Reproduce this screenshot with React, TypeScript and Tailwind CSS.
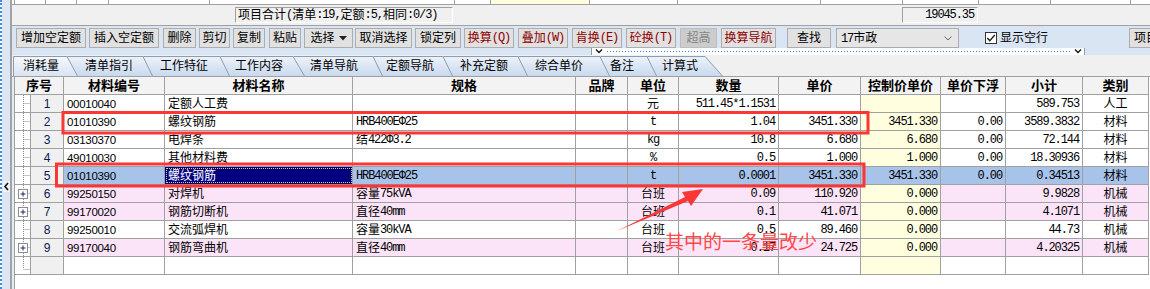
import React from 'react';

const SANS = "font-['Liberation_Sans','Noto_Sans_CJK_SC',sans-serif]";
const MONO = "font-['Liberation_Mono','Noto_Sans_CJK_SC',monospace] text-[12px] tracking-[-1.1px]";
const CJK_RE = /([\u3000-\u9fff\uff00-\uffef]+)/;

// CJK runs keep the page font, ASCII runs get the narrow mono face (SimSun-like widths)
function Mixed({ text }: { text: string }) {
  const parts = text.split(CJK_RE).filter(Boolean);
  return (
    <>
      {parts.map((p, i) =>
        CJK_RE.test(p) ? <span key={i}>{p}</span> : <span key={i} className={MONO}>{p}</span>
      )}
    </>
  );
}

const topCols = [
  { w: 'w-[31px]' }, { w: 'w-[31px]' }, { w: 'w-[32px]' }, { w: 'w-[101px]' }, { w: 'w-[245px]' },
  { w: 'w-[36px]' }, { w: 'w-[99px]', y: true }, { w: 'w-[88px]' }, { w: 'w-[143px]' }, { w: 'w-[82px]' },
  { w: 'w-[76px]' }, { w: 'w-[72px]' }, { w: 'w-[80px]' },
];

const buttons = [
  { label: '增加空定额', cls: 'ml-[4px] w-[70px]' },
  { label: '插入空定额', cls: 'ml-[3px] w-[70px]' },
  { label: '删除', cls: 'ml-[4px] w-[33px]' },
  { label: '剪切', cls: 'ml-[3px] w-[31px]' },
  { label: '复制', cls: 'ml-[3px] w-[32px]' },
  { label: '粘贴', cls: 'ml-[4px] w-[32px]' },
  { label: '选择', cls: 'ml-[3px] w-[49px]', caret: true },
  { label: '取消选择', cls: 'ml-[2px] w-[57px]' },
  { label: '锁定列', cls: 'ml-[3px] w-[46px]' },
  { label: '换算(Q)', cls: 'ml-[3px] w-[50px]', red: true },
  { label: '叠加(W)', cls: 'ml-[4px] w-[50px]', red: true },
  { label: '肯换(E)', cls: 'ml-[4px] w-[50px]', red: true },
  { label: '砼换(T)', cls: 'ml-[4px] w-[50px]', red: true },
  { label: '超高', cls: 'ml-[4px] w-[37px]', disabled: true },
  { label: '换算导航', cls: 'ml-[4px] w-[55px]', red: true },
  { label: '查找', cls: 'ml-[11px] w-[44px]' },
];

const tabs = [
  { label: '消耗量', w: 65, s: 11, cls: 'ml-[1px] w-[65px] pl-[10px] z-[10]' },
  { label: '清单指引', w: 86, s: 10, cls: '-ml-[11px] w-[86px] pl-[18px] z-[9]' },
  { label: '工作特征', w: 87, s: 10, cls: '-ml-[10px] w-[87px] pl-[17px] z-[8]' },
  { label: '工作内容', w: 85, s: 12, cls: '-ml-[10px] w-[85px] pl-[15px] z-[7]' },
  { label: '清单导航', w: 90, s: 10, cls: '-ml-[12px] w-[90px] pl-[17px] z-[6]' },
  { label: '定额导航', w: 80, s: 10, cls: '-ml-[10px] w-[80px] pl-[13px] z-[5]' },
  { label: '补充定额', w: 85, s: 10, cls: '-ml-[10px] w-[85px] pl-[17px] z-[4]' },
  { label: '综合单价', w: 92, s: 10, cls: '-ml-[10px] w-[92px] pl-[17px] z-[3]' },
  { label: '备注', w: 57, s: 10, cls: '-ml-[10px] w-[57px] pl-[10px] z-[2]' },
  { label: '计算式', w: 76, s: 18, cls: '-ml-[10px] w-[76px] pl-[15px] z-[1]' },
];

const headers = [
  { h: '材料编号', w: 'w-[101px]' },
  { h: '材料名称', w: 'w-[188px]' },
  { h: '规格', w: 'w-[223px]' },
  { h: '品牌', w: 'w-[52px]' },
  { h: '单位', w: 'w-[51px]' },
  { h: '数量', w: 'w-[100px]' },
  { h: '单价', w: 'w-[82px]' },
  { h: '控制价单价', w: 'w-[80px]' },
  { h: '单价下浮', w: 'w-[65px]' },
  { h: '小计', w: 'w-[77px]' },
  { h: '类别', w: 'w-[66px]' },
];

type Tone = 'white' | 'pink' | 'sel';
interface Row {
  no: string; code: string; name: string; spec: string; unit: string; qty: string;
  price: string; ctrl: string; down: string; sum: string; cat: string; tone: Tone; plus?: boolean;
}

const rows: Row[] = [
  { no: '1', code: '00010040', name: '定额人工费', spec: '', unit: '元', qty: '511.45*1.1531', price: '', ctrl: '', down: '', sum: '589.753', cat: '人工', tone: 'white' },
  { no: '2', code: '01010390', name: '螺纹钢筋', spec: 'HRB400EΦ25', unit: 't', qty: '1.04', price: '3451.330', ctrl: '3451.330', down: '0.00', sum: '3589.3832', cat: '材料', tone: 'white' },
  { no: '3', code: '03130370', name: '电焊条', spec: '结422Φ3.2', unit: 'kg', qty: '10.8', price: '6.680', ctrl: '6.680', down: '0.00', sum: '72.144', cat: '材料', tone: 'white' },
  { no: '4', code: '49010030', name: '其他材料费', spec: '', unit: '%', qty: '0.5', price: '1.000', ctrl: '1.000', down: '0.00', sum: '18.30936', cat: '材料', tone: 'white' },
  { no: '5', code: '01010390', name: '螺纹钢筋', spec: 'HRB400EΦ25', unit: 't', qty: '0.0001', price: '3451.330', ctrl: '3451.330', down: '0.00', sum: '0.34513', cat: '材料', tone: 'sel' },
  { no: '6', code: '99250150', name: '对焊机', spec: '容量75kVA', unit: '台班', qty: '0.09', price: '110.920', ctrl: '0.000', down: '', sum: '9.9828', cat: '机械', tone: 'pink', plus: true },
  { no: '7', code: '99170020', name: '钢筋切断机', spec: '直径40mm', unit: '台班', qty: '0.1', price: '41.071', ctrl: '0.000', down: '', sum: '4.1071', cat: '机械', tone: 'pink', plus: true },
  { no: '8', code: '99250010', name: '交流弧焊机', spec: '容量30kVA', unit: '台班', qty: '0.5', price: '89.460', ctrl: '0.000', down: '', sum: '44.73', cat: '机械', tone: 'white' },
  { no: '9', code: '99170040', name: '钢筋弯曲机', spec: '直径40mm', unit: '台班', qty: '0.17', price: '24.725', ctrl: '0.000', down: '', sum: '4.20325', cat: '机械', tone: 'pink', plus: true },
  { no: '', code: '', name: '', spec: '', unit: '', qty: '', price: '', ctrl: '', down: '', sum: '', cat: '', tone: 'white' },
];

const toneBg: Record<Tone, string> = {
  white: 'bg-white',
  pink: 'bg-[#fce4f8]',
  sel: 'bg-[#a8c3ea]',
};

function LeftStrip() {
  return (
    <div className="relative flex w-[12px] h-full shrink-0">
      <div className="w-[2px] h-full border-l-2 border-dotted border-[#3f8ee4]" />
      <div className="flex-1 h-full bg-[#dce7f3]" />
      <div className="w-[2px] h-full bg-[#a3a3a3]" />
      <svg className="absolute left-[3px] top-[181px]" width="7" height="11" viewBox="0 0 7 11">
        <rect x="0" y="0" width="7" height="11" fill="#eef2f7" />
        <path d="M5 2 L2 5.5 L5 9" fill="none" stroke="#111" strokeWidth="1.6" />
      </svg>
    </div>
  );
}

function TopFragment() {
  return (
    <div className="flex h-[5px] border-b border-[#a0a0a0] bg-white">
      <div className="w-[2px]" />
      {topCols.map((c, i) => (
        <div key={i} className={`${c.w} h-full border-l border-[#a0a0a0] ${c.y ? 'bg-[#ffffe0]' : ''}`} />
      ))}
      <div className="flex-1 h-full border-l border-[#a0a0a0]" />
    </div>
  );
}

function SummaryBar() {
  return (
    <div className="flex items-center h-[20px] bg-[#f0f0f0]">
      <div className="ml-[223px] w-[218px] h-[16px] flex items-center pl-[2px] border-t border-l border-[#a0a0a0] border-b border-r border-b-white border-r-white leading-[16px] whitespace-nowrap">
        <Mixed text="项目合计(清单:19,定额:5,相同:0/3)" />
      </div>
      <div className="ml-[449px] w-[76px] h-[16px] flex items-center justify-end pr-[3px] border-t border-l border-[#a0a0a0] border-b border-r border-b-white border-r-white">
        <span className={MONO}>19045.35</span>
      </div>
    </div>
  );
}

function Toolbar() {
  return (
    <div className="flex items-start h-[30px] pt-[2px] border-t border-[#a0a0a0] bg-[#d9e5f3] whitespace-nowrap">
      {buttons.map((b) => (
        <div
          key={b.label}
          className={`${b.cls} h-[20px] shrink-0 flex items-center justify-center border leading-none ${
            b.disabled
              ? 'bg-[#cccccc] border-[#bdbdbd] text-[#858585]'
              : 'bg-[#e1e1e1] border-[#adadad] ' + (b.red ? 'text-[#8e0000]' : 'text-black')
          }`}
        >
          <Mixed text={b.label} />
          {b.caret && (
            <svg className="ml-[4px]" width="8" height="5" viewBox="0 0 8 5">
              <path d="M0 0 H8 L4 4.5 Z" fill="#222" />
            </svg>
          )}
        </div>
      ))}
      <div className="ml-[5px] w-[123px] h-[20px] shrink-0 flex items-center justify-between pl-[4px] pr-[6px] bg-[#e6e6e6] border border-[#acacac]">
        <span className="leading-none"><Mixed text="17市政" /></span>
        <svg width="8" height="5" viewBox="0 0 8 5">
          <path d="M0.5 0.5 L4 4 L7.5 0.5" fill="none" stroke="#666" strokeWidth="1" />
        </svg>
      </div>
      <div className="ml-[26px] h-[20px] flex items-center shrink-0">
        <svg width="12" height="12" viewBox="0 0 12 12">
          <rect x="0.5" y="0.5" width="11" height="11" fill="#fff" stroke="#333" />
          <path d="M2.3 6 L4.8 8.6 L9.8 3" fill="none" stroke="#222" strokeWidth="1.4" />
        </svg>
        <span className="ml-[3px] leading-none">显示空行</span>
      </div>
      <div className="ml-[81px] w-[40px] h-[20px] shrink-0 flex items-center pl-[4px] bg-[#e1e1e1] border border-[#adadad] leading-none overflow-hidden">
        项目合计
      </div>
    </div>
  );
}

function TabStrip() {
  return (
    <div className="flex items-end h-[22px] bg-[#f0f0f0] border-b border-[#a0a0a0]">
      {tabs.map((t, i) => (
        <div key={t.label} className={`relative ${t.cls} h-[20px] shrink-0 flex items-center whitespace-nowrap leading-none`}>
          <svg className="absolute left-0 top-0" width={t.w} height="20" viewBox={`0 0 ${t.w} 20`}>
            <defs>
              <linearGradient id={`tabg${i}`} x1="0" y1="0" x2="0" y2="1">
                <stop offset="0" stopColor={i === 0 ? '#f7f9fc' : '#eef3fa'} />
                <stop offset="1" stopColor={i === 0 ? '#d8e4f3' : '#c9d9ee'} />
              </linearGradient>
            </defs>
            <path d={`M0 20 V0 H${t.w - t.s} L${t.w} 20 Z`} fill={`url(#tabg${i})`} />
            <path d={`M0.5 20 V0.5 H${t.w - t.s} L${t.w - 0.5} 20`} fill="none" stroke="#8d9cb2" strokeWidth="1" />
          </svg>
          <span className="relative text-[12px]">{t.label}</span>
        </div>
      ))}
    </div>
  );
}

function TreeCell({ plus, last }: { plus?: boolean; last?: boolean }) {
  return (
    <div className="w-[16px] h-full shrink-0 border-r border-[#a0a0a0] bg-white">
      <svg width="15" height="17" viewBox="0 0 15 17">
        <path d={`M8.5 0 V${last ? 12 : 17}`} stroke="#8c8c8c" strokeDasharray="1 1" />
        <path d={`M${plus ? 12.5 : 8.5} ${last ? 12.5 : 8.5} H15`} stroke="#8c8c8c" strokeDasharray="1 1" />
        {plus && (
          <>
            <rect x="3.5" y="4.5" width="9" height="9" fill="#fff" stroke="#8c8c8c" />
            <path d="M5.5 9 H10.5 M8 6.5 V11.5" stroke="#1b2a6b" strokeWidth="1" />
          </>
        )}
      </svg>
    </div>
  );
}

function Cell({ w, bg, align, children, extra = '' }: { w: string; bg: string; align: 'l' | 'r' | 'c'; children?: React.ReactNode; extra?: string }) {
  const al = align === 'l' ? 'justify-start pl-[3px]' : align === 'r' ? 'justify-end pr-[3px]' : 'justify-center';
  return (
    <div className={`${w} h-full shrink-0 flex items-center overflow-hidden whitespace-nowrap border-r border-[#a0a0a0] leading-[16px] ${al} ${bg} ${extra}`}>
      {children}
    </div>
  );
}

function Grid() {
  return (
    <div className="flex flex-1 bg-white">
      <div className="w-[2px] h-full bg-[#e3ebf5]" />
      <div className="flex flex-col w-[1135px] h-full border-l border-[#a0a0a0]">
        <div className="flex h-[18px] border-b border-[#a0a0a0] bg-[#f3f3f3] font-bold text-[13px] leading-none">
          <div className="w-[49px] h-full flex items-center justify-center border-r border-[#a0a0a0]">序号</div>
          {headers.map((h) => (
            <div key={h.h} className={`${h.w} h-full flex items-center justify-center border-r border-[#a0a0a0] whitespace-nowrap`}>{h.h}</div>
          ))}
        </div>
        {rows.map((r, i) => {
          const bg = toneBg[r.tone];
          const sel = r.tone === 'sel';
          return (
            <div key={i} className="flex h-[18px] border-b border-[#a0a0a0]">
              <TreeCell plus={r.plus} last={i === rows.length - 1} />
              <div className="w-[33px] h-full shrink-0 flex items-center justify-center border-r border-[#a0a0a0] bg-[#f0f0f0] text-[#0b1a55] leading-none">
                {r.no}
              </div>
              <Cell w="w-[101px]" bg={bg} align="l">
                <span className="text-[11.5px] tracking-[-0.3px]">{r.code}</span>
              </Cell>
              <Cell
                w="w-[188px]"
                bg={sel ? 'bg-[#000080] text-white outline-1 outline-dotted outline-[#d9d27a] -outline-offset-2' : bg}
                align="l"
              >
                {r.name}
              </Cell>
              <Cell w="w-[223px]" bg={bg} align="l"><Mixed text={r.spec} /></Cell>
              <Cell w="w-[52px]" bg={bg} align="c" />
              <Cell w="w-[51px]" bg={bg} align="c"><Mixed text={r.unit} /></Cell>
              <Cell w="w-[100px]" bg={bg} align="r"><span className={MONO}>{r.qty}</span></Cell>
              <Cell w="w-[82px]" bg={bg} align="r"><span className={MONO}>{r.price}</span></Cell>
              <Cell w="w-[80px]" bg={sel ? bg : 'bg-[#ffffe0]'} align="r"><span className={MONO}>{r.ctrl}</span></Cell>
              <Cell w="w-[65px]" bg={bg} align="r"><span className={MONO}>{r.down}</span></Cell>
              <Cell w="w-[77px]" bg={bg} align="r"><span className={MONO}>{r.sum}</span></Cell>
              <Cell w="w-[66px]" bg={bg} align="c">{r.cat}</Cell>
            </div>
          );
        })}
      </div>
    </div>
  );
}

function FoldBar() {
  return (
    <svg className="absolute left-[591px] top-[48px]" width="494" height="7" viewBox="0 0 494 7">
      <rect x="0" y="0" width="494" height="7" fill="#fff" />
      <path d="M0.5 0 V7 M493.5 0 V7" stroke="#9a9a9a" />
      <path d="M5 1.5 L8 4.5 L11 1.5" fill="none" stroke="#111" strokeWidth="1.3" />
      <path d="M484 1.5 L487 4.5 L490 1.5" fill="none" stroke="#111" strokeWidth="1.3" />
      <path d="M16 3.5 H481" stroke="#2d8ae6" strokeDasharray="1 2" />
    </svg>
  );
}

function Annotations() {
  return (
    <>
      <svg className="absolute left-0 top-0 pointer-events-none" width="1150" height="289" viewBox="0 0 1150 289">
        <rect x="63" y="112.5" width="805" height="20.5" fill="none" stroke="#fa3636" strokeWidth="3" />
        <rect x="56.5" y="164" width="807.5" height="22" fill="none" stroke="#fa3636" strokeWidth="3" />
        <polygon points="617,231 688,201 691,206 703,189 682,192 685,197" fill="#fa3636" />
      </svg>
      <div className="absolute left-[665px] top-[229px] text-[19px] leading-[24px] text-[#ff4848] font-['Noto_Sans_CJK_SC',sans-serif] whitespace-nowrap">
        其中的一条量改少
      </div>
    </>
  );
}

export default function App() {
  return (
    <div className={`relative flex w-[1150px] h-[289px] overflow-hidden bg-white text-[12px] text-black ${SANS}`}>
      <LeftStrip />
      <div className="flex flex-col flex-1 min-w-0">
        <TopFragment />
        <SummaryBar />
        <Toolbar />
        <TabStrip />
        <Grid />
      </div>
      <FoldBar />
      <Annotations />
    </div>
  );
}
